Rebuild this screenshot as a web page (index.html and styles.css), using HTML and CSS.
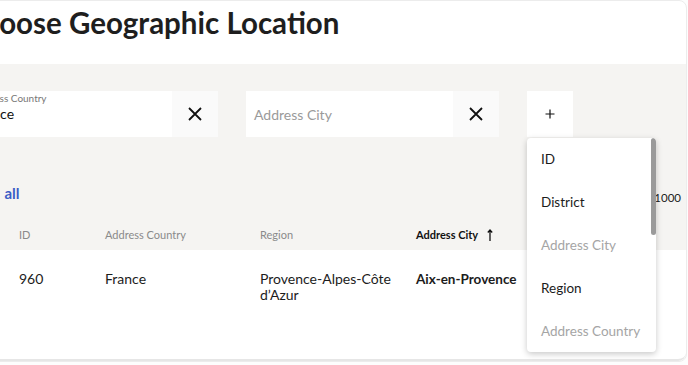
FILE: index.html
```html
<!DOCTYPE html>
<html lang="en">
<head>
    <meta charset="UTF-8">
    <title>Choose Geographic Location</title>
    <link rel="stylesheet" href="styles.css">
</head>
<body>
    <div class="card">
        <div class="head">
            <h1>Choose Geographic Location</h1>
        </div>
        <div class="body">
            <div class="filters">
                <div class="filter">
                    <div class="field">
                        <span class="label">Address Country</span>
                        <span class="value">France</span>
                    </div>
                    <div class="clear">
                        <svg width="14" height="14" viewBox="0 0 14 14"><path d="M1 1L13 13M13 1L1 13" stroke="#111" stroke-width="1.8" fill="none"/></svg>
                    </div>
                </div>
                <div class="filter">
                    <div class="field">
                        <span class="placeholder">Address City</span>
                    </div>
                    <div class="clear">
                        <svg width="14" height="14" viewBox="0 0 14 14"><path d="M1 1L13 13M13 1L1 13" stroke="#111" stroke-width="1.8" fill="none"/></svg>
                    </div>
                </div>
                <div class="add-wrap">
                    <div class="add">
                        <svg width="10" height="10" viewBox="0 0 10 10"><path d="M5 0.5V9.5M0.5 5H9.5" stroke="#111" stroke-width="1.2" fill="none"/></svg>
                    </div>
                    <ul class="menu">
                        <li>ID</li>
                        <li>District</li>
                        <li class="off">Address City</li>
                        <li>Region</li>
                        <li class="off">Address Country</li>
                        <div class="thumb"></div>
                    </ul>
                </div>
            </div>
            <div class="toolbar">
                <a class="select">Select all</a>
                <span class="count">1000</span>
            </div>
            <div class="thead">
                <div class="col c-id">ID</div>
                <div class="col c-country">Address Country</div>
                <div class="col c-region">Region</div>
                <div class="col c-city active">Address City
                    <svg width="6" height="12" viewBox="0 0 6 12"><path d="M3 1V12M0.8 3.5L3 1L5.2 3.5" stroke="#111" stroke-width="1.3" fill="none"/></svg>
                </div>
            </div>
        </div>
        <div class="row">
            <div class="col c-id">960</div>
            <div class="col c-country">France</div>
            <div class="col c-region">Provence-Alpes-Côte d’Azur</div>
            <div class="col c-city strong">Aix-en-Provence</div>
        </div>
    </div>
</body>
</html>
```

FILE: styles.css
```css
*{
    margin: 0;
    padding: 0;
    box-sizing: border-box;
}
body{
    background: #fdfdfd;
    font-family: Lato, "Liberation Sans", sans-serif;
    color: #1c1c1c;
    overflow: hidden;
}
.card{
    width: 729px;
    margin-left: -42px;
    border: 1px solid #ececec;
    border-radius: 8px;
    background: #fff;
    overflow: visible;
}
.head{
    height: 63px;
    display: flex;
    align-items: center;
    padding-left: 4px;
}
.head h1{
    font-size: 29.5px;
    font-weight: 700;
    color: #1e1e1e;
    margin-top: -21px;
}
.body{
    background: #f5f4f2;
    padding: 27px 0 0 6px;
}
.filters{
    display: flex;
    gap: 28px;
}
.filter{
    display: flex;
}
.field{
    width: 207px;
    height: 46px;
    background: #fff;
    padding: 0 8px;
    display: flex;
    flex-direction: column;
    justify-content: center;
}
.label{
    font-size: 10px;
    color: #777;
    margin-top: -14px;
}
.value{
    font-size: 14px;
    color: #111;
    margin-top: 1px;
}
.placeholder{
    font-size: 14px;
    color: #9a9a9a;
}
.clear{
    width: 46px;
    height: 46px;
    background: #fafafa;
    display: flex;
    align-items: center;
    justify-content: center;
}
.add-wrap{
    position: relative;
}
.add{
    width: 46px;
    height: 46px;
    background: #fff;
    display: flex;
    align-items: center;
    justify-content: center;
}
.menu{
    position: absolute;
    top: 47px;
    left: 0;
    width: 129px;
    height: 214px;
    background: #fff;
    border-radius: 4px;
    box-shadow: 0 2px 6px rgba(0,0,0,0.22);
    list-style: none;
    overflow: hidden;
    z-index: 5;
}
.menu li{
    height: 43px;
    line-height: 43px;
    padding-left: 14px;
    font-size: 13.5px;
    color: #1c1c1c;
}
.menu .off{
    color: #a5a5a5;
}
.thumb{
    position: absolute;
    top: 0;
    right: 0;
    width: 5px;
    height: 97px;
    background: #9a9a9a;
    border-radius: 3px;
}
.toolbar{
    display: flex;
    justify-content: space-between;
    align-items: center;
    height: 44px;
    margin-top: 38px;
    padding-right: 5px;
}
.select{
    font-size: 15px;
    font-weight: 700;
    color: #3b5cc6;
    margin-top: -8px;
    margin-left: -11px;
    word-spacing: 6px;
}
.count{
    font-size: 11.5px;
    color: #1c1c1c;
}
.thead{
    display: flex;
    align-items: center;
    height: 31px;
    margin-left: -6px;
    font-size: 11px;
    color: #8a8a8a;
}
.col{
    flex: none;
}
.c-id{
    width: 146px;
    padding-left: 60px;
}
.c-country{
    width: 155px;
}
.c-region{
    width: 156px;
    padding-right: 24px;
}
.c-city{
    width: 140px;
}
.thead .active{
    color: #111;
    font-weight: 700;
    display: flex;
    align-items: center;
    gap: 9px;
}
.row{
    display: flex;
    align-items: flex-start;
    height: 111px;
    padding-top: 21px;
    font-size: 14px;
    line-height: 16px;
    border-bottom: 2px solid #e6e6e6;
    border-radius: 0 0 8px 8px;
}
.strong{
    font-weight: 700;
    font-size: 13.5px;
}
```
